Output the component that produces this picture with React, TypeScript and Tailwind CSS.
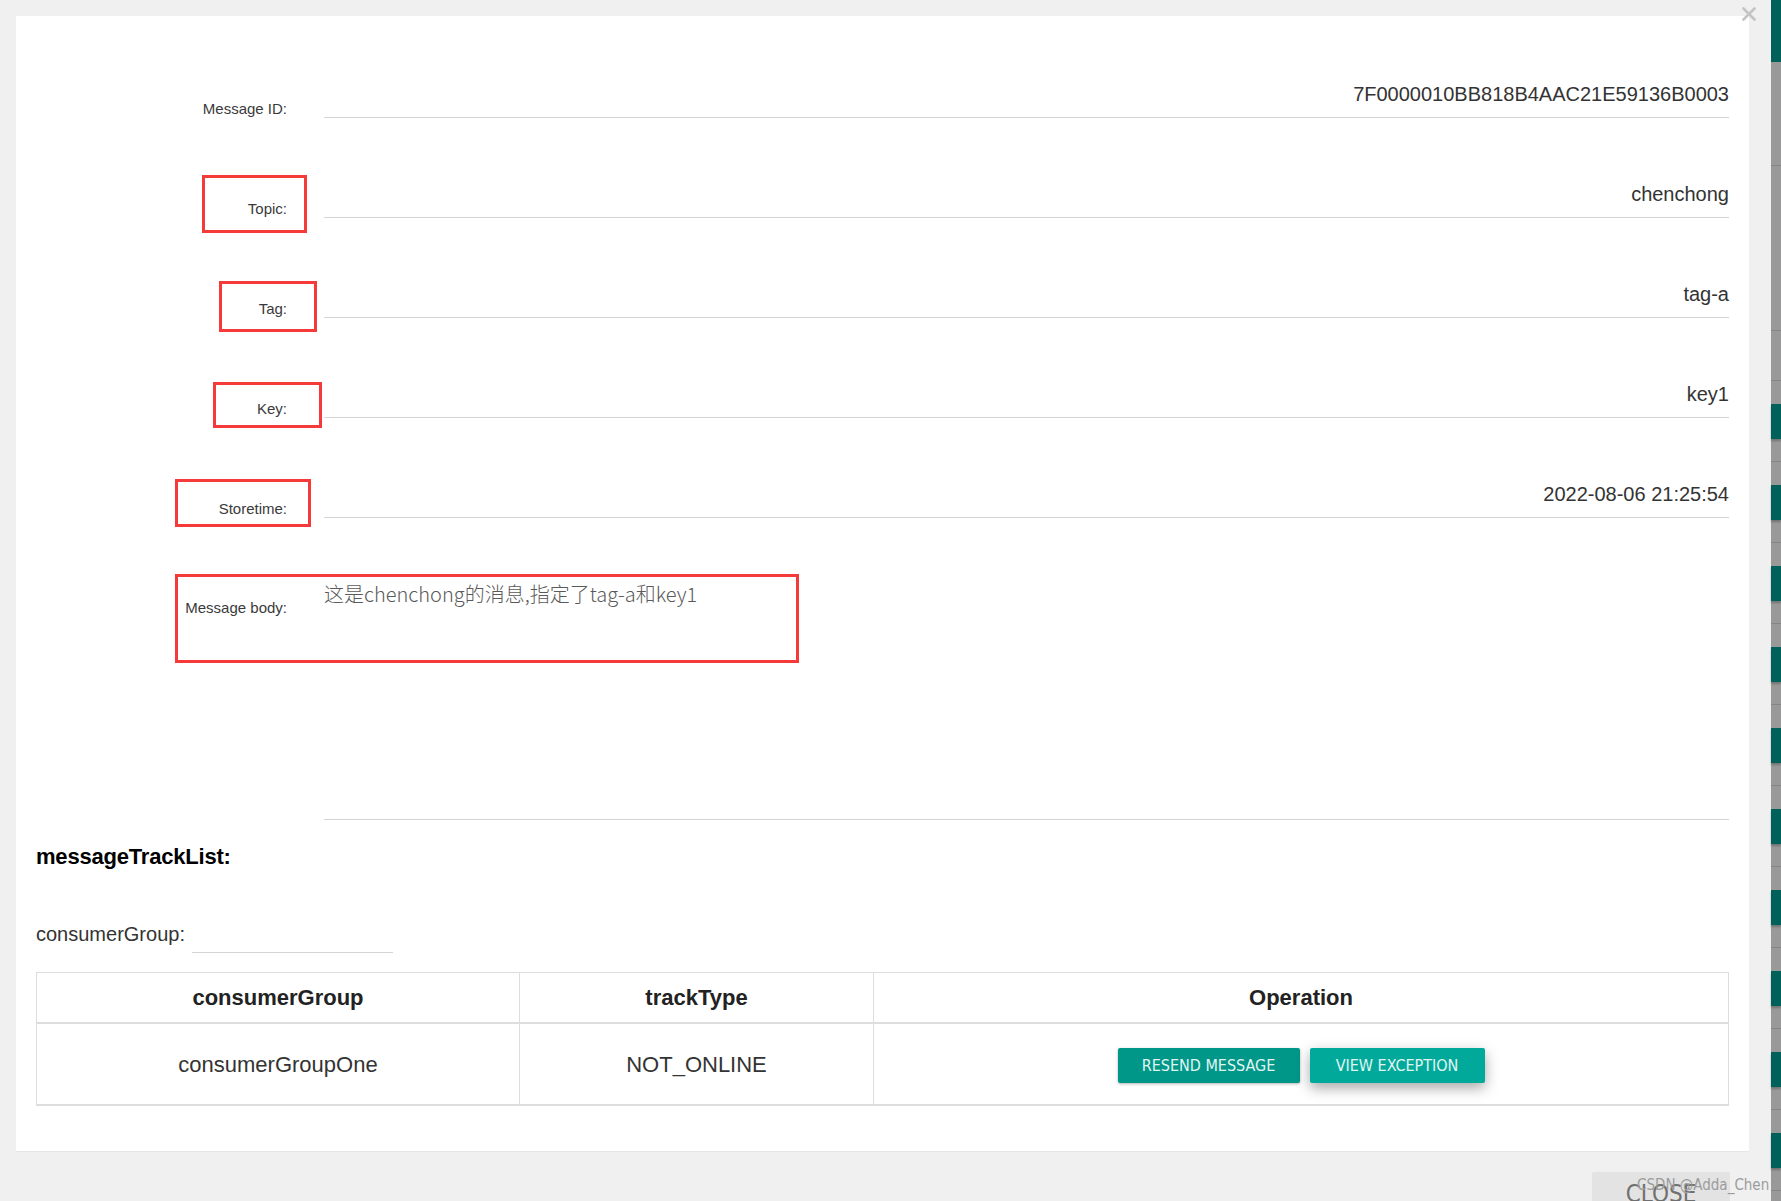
import React from 'react';

const fields = [
  { label: 'Message ID:', value: '7F0000010BB818B4AAC21E59136B0003' },
  { label: 'Topic:', value: 'chenchong' },
  { label: 'Tag:', value: 'tag-a' },
  { label: 'Key:', value: 'key1' },
  { label: 'Storetime:', value: '2022-08-06 21:25:54' },
];

// red annotation boxes drawn on top of the screenshot
const marks = [
  'left-[202px] top-[175px] w-[105px] h-[58px]',
  'left-[219px] top-[281px] w-[98px] h-[51px]',
  'left-[213px] top-[382px] w-[109px] h-[46px]',
  'left-[175px] top-[479px] w-[136px] h-[48px]',
  'left-[175px] top-[574px] w-[624px] h-[89px]',
];

const narrow = { fontFamily: '"Liberation Sans Narrow", "DejaVu Sans Condensed", "Liberation Sans", sans-serif' };

const SideStrip: React.FC = () => (
  <div className="w-[10px] shrink-0 flex flex-col bg-[#999999]">
    <div className="h-[62px] shrink-0 bg-[#00615a]" />
    <div className="h-[104px] shrink-0 border-b border-[#858585]" />
    <div className="h-[165px] shrink-0 border-b border-[#858585]" />
    <div className="h-[50px] shrink-0 border-b border-[#858585]" />
    {Array.from({ length: 10 }).map((_, i) => (
      <div key={i} className="h-[81px] shrink-0 border-b border-[#858585] pt-[23px]">
        <div className="h-[35px] bg-[#00615a] shadow-[0_2px_2px_rgba(0,0,0,0.25)]" />
      </div>
    ))}
  </div>
);

export default function App() {
  return (
    <div
      className="relative w-[1781px] h-[1201px] overflow-hidden bg-[#f0f0f0] flex"
      style={{ fontFamily: '"Liberation Sans", Arial, sans-serif' }}
    >
      <div className="flex-1 flex flex-col pt-[16px]">
        <div className="shrink-0 ml-[16px] w-[1733px] h-[1136px] bg-white border-b border-[#e6e6e6] px-[20px] pt-[2px]">
          {fields.map((f) => (
            <div key={f.label} className="h-[100px] flex items-end">
              <div className="w-[251px] shrink-0 text-right text-[15px] leading-[17px] pb-[1px] text-[#3a3a3a]">{f.label}</div>
              <div className="ml-[37px] flex-1 border-b border-[#d4d4d4] text-right text-[20px] leading-[23px] pb-[11px] text-[#333]">
                {f.value}
              </div>
            </div>
          ))}

          <div className="h-[302px] flex items-start">
            <div className="w-[251px] shrink-0 text-right text-[15px] leading-[17px] text-[#3a3a3a] pt-[81px]">Message body:</div>
            <div
              className="ml-[37px] flex-1 h-full border-b border-[#d4d4d4] pt-[61px] text-[20px] leading-[30px] font-light text-[#5a5a5a]"
              style={{ fontFamily: '"Noto Sans CJK SC", "Noto Sans", sans-serif' }}
            >
              这是chenchong的消息,指定了tag-a和key1
            </div>
          </div>

          <div className="mt-[24px] text-[22px] leading-[25px] font-bold text-black tracking-[-0.2px]">messageTrackList:</div>

          <div className="mt-[54px] flex items-end">
            <div className="text-[20px] leading-[23px] pb-[7px] text-[#333]">consumerGroup:</div>
            <div className="ml-[7px] w-[201px] h-[30px] border-b border-[#d4d4d4]" />
          </div>

          <div className="mt-[19px] border border-b-2 border-[#dddddd]">
            <div className="flex h-[51px] border-b-2 border-[#dddddd] text-[22px] font-bold text-[#222]">
              <div className="w-[483px] border-r border-[#dddddd] flex items-center justify-center">consumerGroup</div>
              <div className="w-[354px] border-r border-[#dddddd] flex items-center justify-center">trackType</div>
              <div className="flex-1 flex items-center justify-center">Operation</div>
            </div>
            <div className="flex h-[80px] text-[22px] text-[#333]">
              <div className="w-[483px] border-r border-[#dddddd] flex items-center justify-center">consumerGroupOne</div>
              <div className="w-[354px] border-r border-[#dddddd] flex items-center justify-center">NOT_ONLINE</div>
              <div className="flex-1 flex items-center justify-center gap-[10px] pt-[3px]">
                <button
                  className="w-[182px] h-[35px] rounded-[2px] bg-[#009688] text-[#e0f5f2] text-[16px] uppercase shadow-[0_1px_3px_rgba(0,0,0,0.3)]"
                  style={narrow}
                >
                  Resend Message
                </button>
                <button
                  className="w-[175px] h-[35px] rounded-[2px] bg-[#00a99a] text-[#e0f5f2] text-[16px] uppercase shadow-[0_5px_14px_rgba(0,0,0,0.35)]"
                  style={narrow}
                >
                  View Exception
                </button>
              </div>
            </div>
          </div>
        </div>

        <div className="shrink-0 mt-[20px] flex justify-end pr-[19px]">
          <div className="w-[138px] h-[40px] bg-[#e3e3e3] rounded-[2px] pt-[8px] text-center text-[24px] leading-[28px] text-[#707070]" style={narrow}>
            CLOSE
          </div>
        </div>
      </div>

      <div className="w-[22px] shrink-0" />
      <SideStrip />

      {marks.map((m) => (
        <div key={m} className={`absolute border-[3px] border-[#f63a3a] pointer-events-none ${m}`} />
      ))}

      <svg className="absolute left-[1742px] top-[7px]" width="14" height="14" viewBox="0 0 14 14">
        <path d="M1.5 1.5 L12.5 12.5 M12.5 1.5 L1.5 12.5" stroke="#c4c4c4" strokeWidth="2.6" strokeLinecap="round" />
      </svg>

      <div className="absolute left-[1637px] top-[1177px] text-[15px] leading-[17px] text-[#9c9c9c] whitespace-nowrap" style={narrow}>
        CSDN @Adda_Chen
      </div>
    </div>
  );
}
